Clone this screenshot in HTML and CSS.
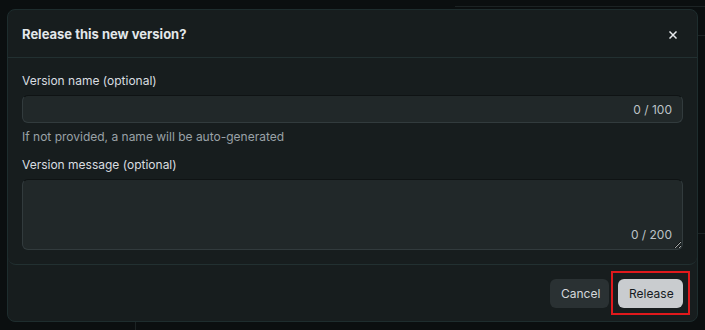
FILE: index.html
```html
<!DOCTYPE html>
<html lang="en">
<head>
<meta charset="utf-8">
<title>Release this new version?</title>
<link rel="stylesheet" href="styles.css">
</head>
<body>
<div class="backdrop">
  <div class="bg-line bg-top"></div>
  <div class="bg-line bg-r1"></div>
  <div class="bg-line bg-r2"></div>
  <div class="bg-vline"></div>
</div>
<div class="dialog">
  <div class="header">
    <h2 class="title">Release this new version?</h2>
    <button class="close" aria-label="Close">
      <svg width="8" height="8" viewBox="0 0 8 8"><path d="M1 1L7 7M7 1L1 7" stroke="#e6e9ec" stroke-width="1.5" stroke-linecap="square"/></svg>
    </button>
  </div>
  <div class="body">
    <label class="label">Version name (optional)</label>
    <div class="input">
      <span class="count">0 / 100</span>
    </div>
    <p class="help">If not provided, a name will be auto-generated</p>
    <label class="label label2">Version message (optional)</label>
    <div class="textarea-wrap">
      <textarea class="textarea"></textarea>
      <span class="count count-ta">0 / 200</span>
    </div>
  </div>
  <div class="footer">
    <button class="btn btn-cancel">Cancel</button>
    <button class="btn btn-release">Release</button>
  </div>
</div>
</body>
</html>
```
FILE: styles.css
```css
* { box-sizing: border-box; }
html, body { margin: 0; padding: 0; }
body {
  width: 705px;
  height: 330px;
  background: #0b0f10;
  font-family: Inter, "Liberation Sans", Arial, sans-serif;
  position: relative;
  overflow: hidden;
  padding: 9px 7px 0 7px;
}
.backdrop { position: absolute; inset: 0; }
.bg-line { position: absolute; height: 1px; background: #1c2324; }
.bg-top { top: 6px; left: 455px; right: 0; }
.bg-r1 { top: 35px; left: 690px; right: 0; }
.bg-r2 { top: 233px; left: 690px; right: 0; }
.bg-vline { position: absolute; left: 135px; top: 322px; bottom: 0; width: 1px; background: #1c2324; }

.dialog {
  position: relative;
  width: 691px;
  height: 313px;
  background: #171d1e;
  border: 1px solid #1e2d2e;
  border-radius: 8px;
  display: flex;
  flex-direction: column;
}
.header {
  height: 48px;
  display: flex;
  align-items: center;
  justify-content: space-between;
  padding: 0 20px 0 14px;
  border-bottom: 1px solid #223031;
}
.title {
  margin: 0;
  font-size: 13px;
  font-weight: 700;
  color: #e3e7ea;
}
.close {
  background: none;
  border: 0;
  padding: 0;
  width: 8px;
  height: 8px;
  display: flex;
  margin-top: 2px;
}
.body {
  padding: 15px 14px 14px 14px;
  display: flex;
  flex-direction: column;
  border-bottom: 1px solid #223031;
  border-radius: 0 0 8px 8px;
}
.label {
  display: block;
  font-size: 12px;
  line-height: 16px;
  color: #d9dde0;
  margin-bottom: 6px;
}
.label2 { margin-top: 12px; }
.input {
  height: 28px;
  flex: none;
  background: #212829;
  border: 1px solid #323b3d;
  border-top-color: #0f1314;
  border-radius: 6px;
  display: flex;
  align-items: center;
  justify-content: flex-end;
  padding: 0 10px;
}
.count {
  font-size: 12px;
  color: #bcc2c6;
}
.help {
  margin: 6px 0 0 0;
  font-size: 12px;
  line-height: 16px;
  color: #9aa2a7;
}
.textarea-wrap { position: relative; height: 71px; flex: none; }
.textarea {
  display: block;
  width: 100%;
  height: 71px;
  margin: 0;
  background: #212829;
  border: 1px solid #323b3d;
  border-top-color: #0f1314;
  border-radius: 6px;
  resize: vertical;
  outline: none;
  color: #d9dde0;
}
.count-ta {
  position: absolute;
  right: 11px;
  bottom: 8px;
}
.footer {
  flex: 1;
  display: flex;
  justify-content: flex-end;
  align-items: flex-start;
  gap: 9px;
  padding: 14px 14px 0 0;
}
.btn {
  height: 29px;
  border: 0;
  border-radius: 6px;
  font-family: inherit;
  font-size: 12px;
  padding: 0 11px;
}
.btn-cancel {
  background: #2a3133;
  color: #d4d8dc;
  width: 59px;
}
.btn-release {
  position: relative;
  background: #c9cccf;
  color: #161b1e;
  width: 65px;
}
.btn-release::after {
  content: "";
  position: absolute;
  left: -7px;
  right: -7px;
  top: -8px;
  bottom: -7px;
  border: 2px solid #e0191c;
}
```
